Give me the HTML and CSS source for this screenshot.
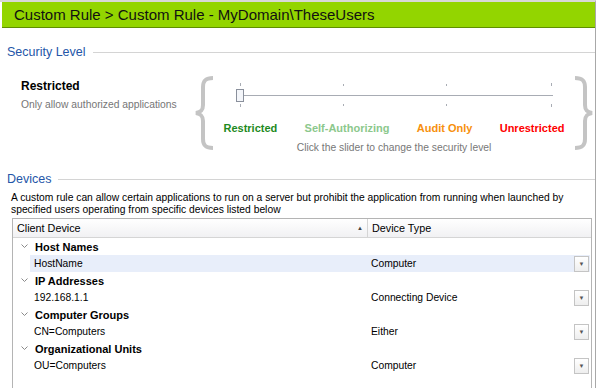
FILE: index.html
```html
<!DOCTYPE html>
<html lang="en">
<head>
    <meta charset="UTF-8">
    <title>Custom Rule</title>
    <link rel="stylesheet" href="styles.css">
</head>
<body>
    <div class="window">
        <div class="title-bar">Custom Rule &gt; Custom Rule - MyDomain\TheseUsers</div>

        <div class="section-head">
            <span class="section-title">Security Level</span>
            <span class="section-line"></span>
        </div>

        <div class="level">
            <div class="level-info">
                <div class="level-name">Restricted</div>
                <div class="level-desc">Only allow authorized applications</div>
            </div>
            <svg class="brace" width="24" height="76" viewBox="0 0 24 76">
                <path d="M20 3 C12 3 10 6 10 12 L10 30 C10 35 8 37 3 38 C8 39 10 41 10 46 L10 64 C10 70 12 73 20 73" fill="none" stroke="#c4c4c4" stroke-width="4"/>
            </svg>
            <div class="scale">
                <svg class="slider" width="330" height="30" viewBox="0 0 330 30">
                    <g stroke="#a8acb4" stroke-width="1">
                        <line x1="10.5" y1="1" x2="10.5" y2="4"/>
                        <line x1="113.5" y1="2" x2="113.5" y2="4"/>
                        <line x1="216.5" y1="2" x2="216.5" y2="4"/>
                        <line x1="321.5" y1="1" x2="321.5" y2="4"/>
                        <line x1="10.5" y1="22" x2="10.5" y2="25"/>
                        <line x1="113.5" y1="22" x2="113.5" y2="24"/>
                        <line x1="216.5" y1="22" x2="216.5" y2="24"/>
                        <line x1="321.5" y1="22" x2="321.5" y2="25"/>
                        <line x1="10" y1="13.5" x2="323" y2="13.5"/>
                    </g>
                    <rect x="6.5" y="7.5" width="7" height="12" fill="#f4f6fa" stroke="#8a909c"/>
                </svg>
                <div class="scale-labels">
                    <span class="lbl-restricted">Restricted</span>
                    <span class="lbl-self">Self-Authorizing</span>
                    <span class="lbl-audit">Audit Only</span>
                    <span class="lbl-unrestricted">Unrestricted</span>
                </div>
                <div class="scale-hint">Click the slider to change the security level</div>
            </div>
            <svg class="brace" width="24" height="76" viewBox="0 0 24 76">
                <path d="M4 3 C12 3 14 6 14 12 L14 30 C14 35 16 37 21 38 C16 39 14 41 14 46 L14 64 C14 70 12 73 4 73" fill="none" stroke="#c4c4c4" stroke-width="4"/>
            </svg>
        </div>

        <div class="section-head devices-head">
            <span class="section-title">Devices</span>
            <span class="section-line"></span>
        </div>
        <p class="devices-text">A custom rule can allow certain applications to run on a server but prohibit the application from running when launched by specified users operating from specific devices listed below</p>

        <div class="grid">
            <div class="grid-header">
                <div class="col-device">Client Device<span class="sort">&#9650;</span></div>
                <div class="col-type">Device Type</div>
            </div>

            <div class="group-row"><svg class="chev" width="7" height="5" viewBox="0 0 7 5"><path d="M0.5 0.5 L3.5 3.5 L6.5 0.5" fill="none" stroke="#8a8a8a"/></svg>Host Names</div>
            <div class="item-row selected">
                <div class="col-device">HostName</div>
                <div class="col-type">Computer</div>
                <span class="drop">&#9660;</span>
            </div>

            <div class="group-row"><svg class="chev" width="7" height="5" viewBox="0 0 7 5"><path d="M0.5 0.5 L3.5 3.5 L6.5 0.5" fill="none" stroke="#8a8a8a"/></svg>IP Addresses</div>
            <div class="item-row">
                <div class="col-device">192.168.1.1</div>
                <div class="col-type">Connecting Device</div>
                <span class="drop">&#9660;</span>
            </div>

            <div class="group-row"><svg class="chev" width="7" height="5" viewBox="0 0 7 5"><path d="M0.5 0.5 L3.5 3.5 L6.5 0.5" fill="none" stroke="#8a8a8a"/></svg>Computer Groups</div>
            <div class="item-row">
                <div class="col-device">CN=Computers</div>
                <div class="col-type">Either</div>
                <span class="drop">&#9660;</span>
            </div>

            <div class="group-row"><svg class="chev" width="7" height="5" viewBox="0 0 7 5"><path d="M0.5 0.5 L3.5 3.5 L6.5 0.5" fill="none" stroke="#8a8a8a"/></svg>Organizational Units</div>
            <div class="item-row">
                <div class="col-device">OU=Computers</div>
                <div class="col-type">Computer</div>
                <span class="drop">&#9660;</span>
            </div>
        </div>
    </div>
</body>
</html>
```

FILE: styles.css
```css
body {
    margin: 0;
    padding: 0;
    background-color: #fff;
    font-family: 'Liberation Sans', Arial, sans-serif;
    font-size: 10.3px;
    color: #000;
    overflow: hidden;
}
.window {
    width: 596px;
    height: 388px;
    border-right: 1px solid #a8a8a8;
    border-top: 2px solid #d8d8d8;
    box-sizing: border-box;
    overflow: hidden;
}
.title-bar {
    height: 25px;
    margin-left: 2px;
    padding-left: 12px;
    background-color: #93d500;
    border-bottom: 1px solid #5f8f00;
    font-size: 15px;
    line-height: 25px;
    color: #111;
}
.section-head {
    display: flex;
    align-items: center;
    height: 16px;
    margin-top: 16px;
    padding-left: 7px;
}
.section-title {
    font-size: 12.5px;
    color: #2456a8;
    margin-right: 7px;
}
.section-line {
    flex-grow: 1;
    border-top: 1px solid #d4d4d4;
    margin-top: 1px;
}
.level {
    display: flex;
    align-items: flex-start;
    height: 111px;
    padding-top: 15px;
    box-sizing: border-box;
}
.level-info {
    width: 173px;
    padding-left: 21px;
    padding-top: 4px;
}
.level-name {
    font-weight: bold;
    font-size: 12px;
}
.level-desc {
    margin-top: 6px;
    color: #767676;
}
.brace {
    display: block;
    flex-shrink: 0;
}
.scale {
    width: 356px;
    display: flex;
    flex-direction: column;
    align-items: center;
    padding-top: 7px;
}
.slider {
    display: block;
    margin-left: 2px;
}
.scale-labels {
    display: flex;
    justify-content: space-between;
    width: 341px;
    margin-top: 10px;
    font-size: 11px;
    font-weight: bold;
}
.lbl-restricted { color: #1e8a1e; }
.lbl-self { color: #8cc88c; }
.lbl-audit { color: #f7900e; }
.lbl-unrestricted { color: #f00; }
.scale-hint {
    margin-top: 8px;
    color: #777;
}
.devices-head {
    margin-top: 0;
}
.devices-text {
    margin: 5px 0 0 11px;
    width: 570px;
    line-height: 12px;
}
.grid {
    margin: 2px 0 0 12px;
    width: 580px;
    height: 172px;
    border: 1px solid #b4b4b4;
    box-sizing: border-box;
}
.grid-header {
    display: flex;
    height: 19px;
    line-height: 18px;
    background: linear-gradient(#fff, #f1f1f3);
    border-bottom: 1px solid #d5d5d5;
    box-sizing: border-box;
    font-size: 10.8px;
}
.grid-header .col-device {
    width: 350px;
    padding-left: 4px;
    border-right: 1px solid #d5d5d5;
    position: relative;
}
.sort {
    position: absolute;
    right: 4px;
    top: 0;
    font-size: 6px;
    color: #444;
}
.grid-header .col-type {
    padding-left: 4px;
}
.group-row {
    display: flex;
    align-items: center;
    height: 17px;
    padding-left: 8px;
    font-weight: bold;
    font-size: 11px;
}
.chev {
    margin-right: 7px;
}
.item-row {
    display: flex;
    align-items: center;
    height: 17px;
    margin-left: 17px;
    margin-right: 1px;
}
.item-row.selected {
    background-color: #e8eefa;
}
.item-row .col-device {
    width: 337px;
    padding-left: 4px;
}
.item-row .col-type {
    flex-grow: 1;
}
.drop {
    width: 13px;
    height: 14px;
    margin-right: 1px;
    border: 1px solid #c4c4c4;
    background: linear-gradient(#fff, #eee);
    font-size: 6px;
    line-height: 14px;
    text-align: center;
    color: #555;
}
```
